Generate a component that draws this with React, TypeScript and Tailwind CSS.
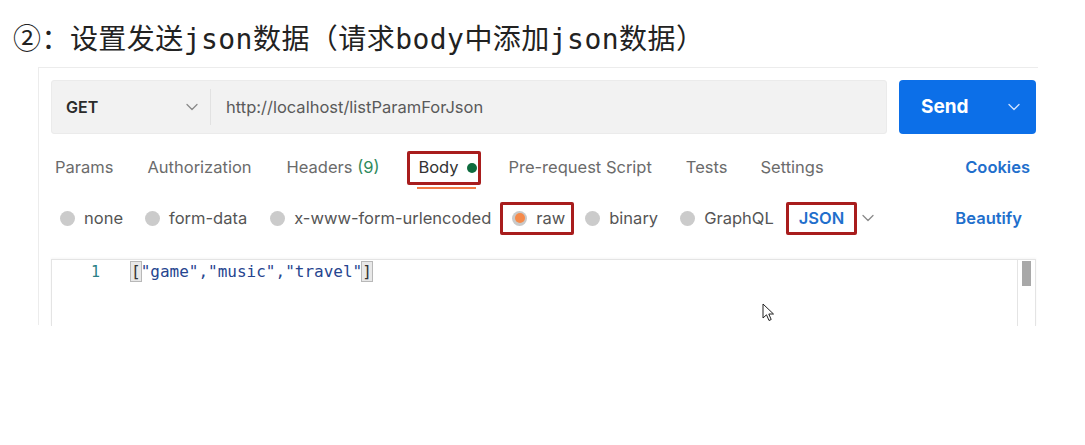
import React from "react";

const Chevron = ({ className = "", color = "#8a8a8a" }: { className?: string; color?: string }) => (
  <svg className={className} width="12" height="8" viewBox="0 0 12 8" fill="none">
    <path d="M1 1.5 L6 6.5 L11 1.5" stroke={color} strokeWidth="1.3" strokeLinecap="round" strokeLinejoin="round" />
  </svg>
);

const Radio = ({ label, active = false }: { label: string; active?: boolean }) => (
  <div className="flex items-center gap-[9px]">
    {active ? (
      <span className="w-[15px] h-[15px] rounded-full bg-[#c9c9c9] flex items-center justify-center">
        <span className="w-[10px] h-[10px] rounded-full bg-[#f58a4b]" />
      </span>
    ) : (
      <span className="w-[15px] h-[15px] rounded-full bg-[#cbcbcb]" />
    )}
    <span>{label}</span>
  </div>
);

export default function App() {
  return (
    <div className="w-[1085px] h-[445px] bg-white overflow-hidden relative" style={{ fontFamily: "Inter, 'Noto Sans', sans-serif" }}>
      <div
        className="pl-[13px] pt-[22px] text-[28px] leading-[36px] tracking-[0.45px] text-[#222]"
        style={{ fontFamily: "'DejaVu Sans Mono', 'Noto Sans CJK SC', monospace" }}
      >
        ②：设置发送json数据（请求body中添加json数据）
      </div>

      <div className="ml-[38px] mt-[9px] w-[1000px] h-[258px] border-l border-t border-[#ececec] pl-[12px] pt-[12px]">
        {/* URL bar */}
        <div className="flex gap-[12px] h-[54px]">
          <div className="w-[836px] bg-[#f2f2f2] rounded-[3px] border border-[#ebebeb] flex items-center">
            <div className="w-[158px] pl-[14px] pr-[12px] flex items-center justify-between">
              <span className="text-[16px] font-semibold text-[#2b2b2b]">GET</span>
              <Chevron />
            </div>
            <div className="w-px h-[36px] bg-[#e2e2e2]" />
            <span className="pl-[15px] text-[16.5px] text-[#5a5a5a]">http://localhost/listParamForJson</span>
          </div>
          <div className="w-[137px] bg-[#0c6fe8] rounded-[4px] flex items-center pl-[22px] pr-[16px] justify-between">
            <span className="text-[19px] font-bold text-white">Send</span>
            <Chevron color="#cfe2ff" />
          </div>
        </div>

        {/* tabs */}
        <div className="flex items-center h-[53px] mt-[7px] text-[16.5px] text-[#6b6b6b] relative">
          <span className="ml-[4px]">Params</span>
          <span className="ml-[34px]">Authorization</span>
          <span className="ml-[35px]">
            Headers <span className="text-[#2f8a5d]">(9)</span>
          </span>
          <div className="ml-[28px] relative">
            <div className="border-[3px] border-[#a81d1d] rounded-[2px] h-[34px] w-[74px] flex items-center pl-[8px] gap-[8px] text-[#333]">
              <span>Body</span>
              <span className="w-[10px] h-[10px] rounded-full bg-[#0e6b3e]" />
            </div>
            <div className="absolute left-[10px] top-[36px] w-[59px] h-[2px] bg-[#f27a45]" />
          </div>
          <span className="ml-[27px]">Pre-request Script</span>
          <span className="ml-[34px]">Tests</span>
          <span className="ml-[33px]">Settings</span>
          <span className="ml-auto mr-[8px] font-semibold text-[#1f6fcc]">Cookies</span>
        </div>

        {/* body types */}
        <div className="flex items-center h-[36px] mt-[6px] text-[16.5px] text-[#555]">
          <div className="ml-[9px]"><Radio label="none" /></div>
          <div className="ml-[22px]"><Radio label="form-data" /></div>
          <div className="ml-[23px]"><Radio label="x-www-form-urlencoded" /></div>
          <div className="ml-[9px] border-[3px] border-[#a81d1d] rounded-[2px] h-[33px] w-[74px] flex items-center pl-[9px]">
            <Radio label="raw" active />
          </div>
          <div className="ml-[11px]"><Radio label="binary" /></div>
          <div className="ml-[22px]"><Radio label="GraphQL" /></div>
          <div className="ml-[12px] border-[3px] border-[#a81d1d] rounded-[2px] h-[33px] w-[71px] flex items-center pl-[10px] font-semibold text-[#1f6fcc]">
            JSON
          </div>
          <Chevron className="ml-[5px]" />
          <span className="ml-auto mr-[16px] font-semibold text-[#1f6fcc]">Beautify</span>
        </div>

        {/* editor */}
        <div className="mt-[23px] h-[67px] w-[985px] border-t border-l border-[#e4e4e4] shadow-[0_-1px_2px_rgba(0,0,0,0.04)] flex">
          <div className="flex-1 flex items-start" style={{ fontFamily: "'DejaVu Sans Mono', monospace" }}>
            <span className="w-[48px] text-right text-[15px] leading-[24px] text-[#2a7f86]">1</span>
            <span className="ml-[31px] text-[16px] leading-[24px] text-[#26458f]">
              <span className="bg-[#e8e8e8] outline outline-1 outline-[#b8b8b8] text-[#333]">[</span>
              "game","music","travel"
              <span className="bg-[#e8e8e8] outline outline-1 outline-[#b8b8b8] text-[#333]">]</span>
            </span>
          </div>
          <div className="w-[19px] border-l border-r border-[#e4e4e4] flex justify-center">
            <div className="w-[9px] h-[25px] bg-[#a8a8a8] mt-[1px]" />
          </div>
        </div>
      </div>

      {/* mouse cursor */}
      <svg className="absolute left-[762px] top-[303px]" width="14" height="20" viewBox="0 0 14 20">
        <path d="M1 1 L1 15 L4.5 11.8 L7 17.5 L9.2 16.5 L6.8 11 L11.5 11 Z" fill="white" stroke="#222" strokeWidth="1" strokeLinejoin="round" />
      </svg>
    </div>
  );
}
